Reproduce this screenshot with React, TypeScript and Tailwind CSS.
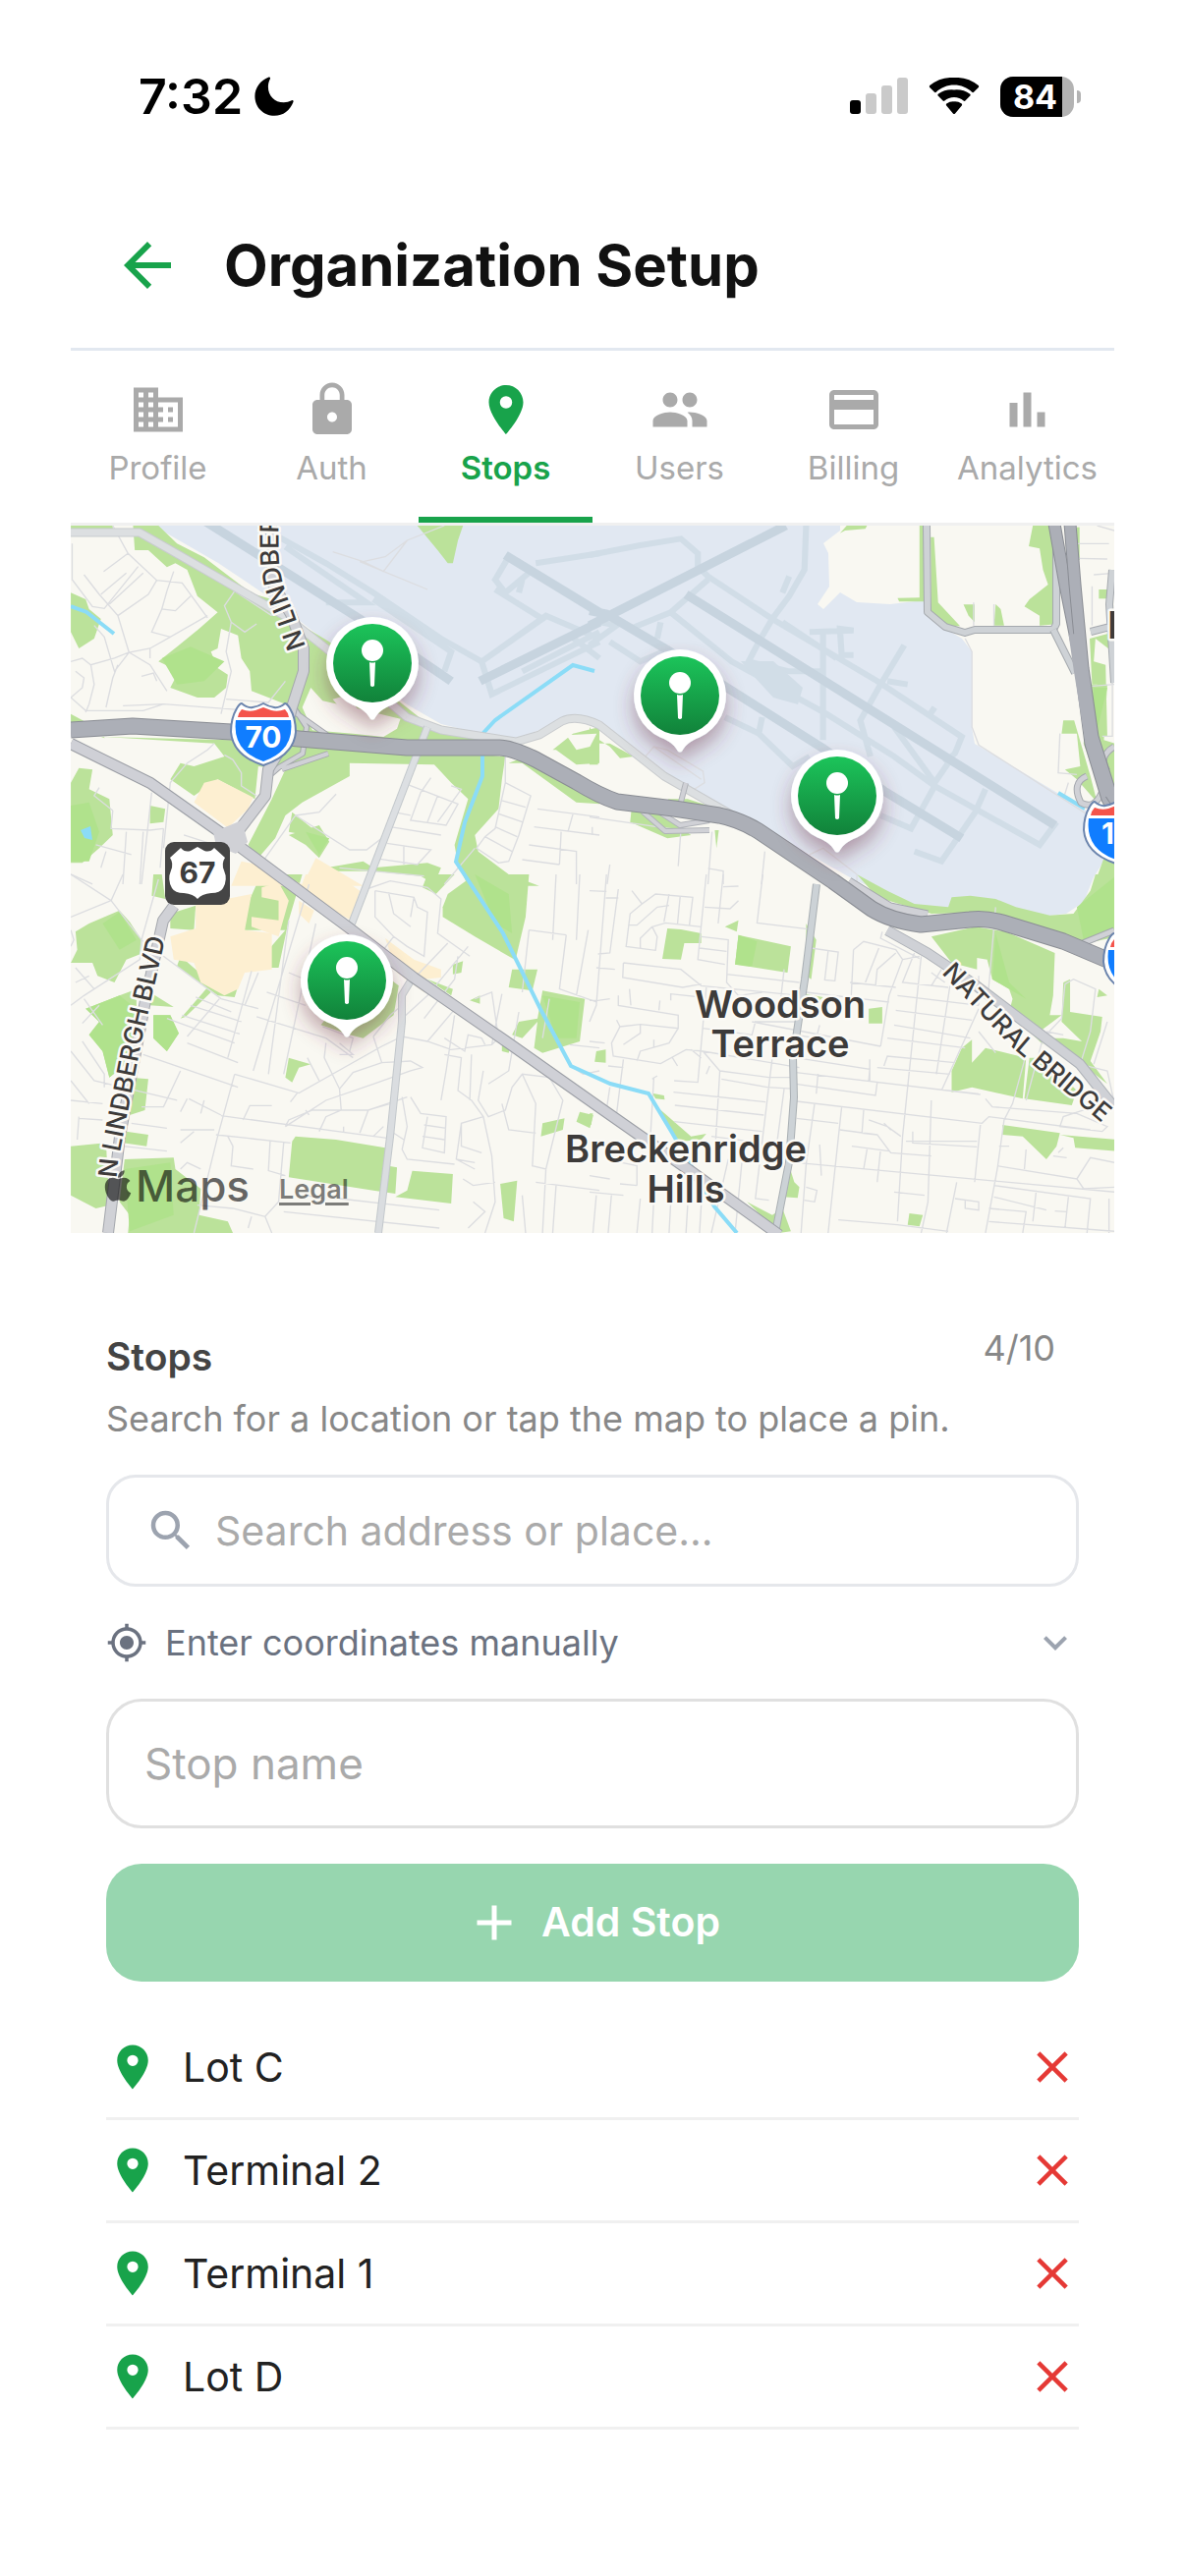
import type { ReactNode } from "react";
import {
  MdAdd,
  MdArrowBack,
  MdBusiness,
  MdClose,
  MdCreditCard,
  MdExpandMore,
  MdLock,
  MdMyLocation,
  MdPeople,
  MdSearch,
} from "react-icons/md";
import { FaApple } from "react-icons/fa";

type IconProps = { className?: string };

function PlaceIcon({ className }: IconProps) {
  return (
    <svg viewBox="0 0 24 24" fill="currentColor" className={className} aria-hidden="true">
      <path d="M12 2C8.13 2 5 5.13 5 9c0 5.25 7 13 7 13s7-7.75 7-13c0-3.87-3.13-7-7-7zm0 9.5a2.5 2.5 0 0 1 0-5 2.5 2.5 0 0 1 0 5z" />
    </svg>
  );
}

function AnalyticsIcon({ className }: IconProps) {
  return (
    <svg viewBox="0 0 24 24" fill="currentColor" className={className} aria-hidden="true">
      <path d="M4.600 9.2h3.2V19H4.600zM10.200 5h3.2v14h-3.2zM15.800 13h3.2v6h-3.200z" />
    </svg>
  );
}

function StatusBar() {
  return (
    <div className="flex h-[132px] items-center justify-between pt-16 pr-[34px] pl-[69px] text-black">
      <div className="flex items-center gap-3">
        <span className="text-[50px] leading-[60px] font-semibold">7:32</span>
        <svg viewBox="0 0 40 40" className="size-10" aria-hidden="true">
          <path
            d="M14.5 0.6C15.6 0 16.5 1 15.9 2.2C14.6 4.8 13.9 7.6 13.9 10.4C13.9 19.6 20.6 26.2 29.8 26.2C32.6 26.2 35.4 25.4 37.8 24.2C39 23.6 40 24.5 39.5 25.7C36.3 34.2 29.2 39.8 20.4 39.8C9 39.8 0.4 31.2 0.4 20C0.4 11.4 6 4 14.5 0.6Z"
            fill="#000"
          />
        </svg>
      </div>
      <div className="flex items-center gap-[21px]">
        <svg viewBox="0 0 59 38" className="h-[38px] w-[59px]" aria-label="Signal">
          <rect x="0" y="23" width="11" height="14" rx="3" fill="#000" />
          <rect x="16" y="16" width="11" height="21" rx="3" fill="#cacaca" />
          <rect x="32" y="8" width="11" height="29" rx="3" fill="#cacaca" />
          <rect x="48" y="0" width="11" height="37" rx="3" fill="#cacaca" />
        </svg>
        <svg viewBox="0 0 52 38" className="h-[38px] w-[52px]" aria-label="Wi-Fi">
          <path d="M26 7.6c7 0 13.4 2.7 18.2 7.2.5.5 1.3.5 1.8 0l4.8-4.9c.5-.5.5-1.3 0-1.8A36 36 0 0 0 26 0 36 36 0 0 0 1.2 8.1c-.5.5-.5 1.3 0 1.8L6 14.8c.5.5 1.3.5 1.8 0C12.6 10.3 19 7.6 26 7.6z" />
          <path d="M26 20c3.7 0 7 1.3 9.6 3.6.5.5 1.3.5 1.8 0l4.9-5c.5-.5.5-1.3 0-1.8A24 24 0 0 0 26 12.500a24 24 0 0 0-16.300 4.300c-.5.5-.5 1.3 0 1.800l4.900 5c.5.5 1.300.5 1.800 0C19 21.300 22.300 20 26 20z" />
          <path d="M33.800 28.400c.5-.5.5-1.300-.1-1.800A12 12 0 0 0 26 24.400a12 12 0 0 0-7.700 2.200c-.6.5-.6 1.300-.1 1.800l6.900 8.300c.5.5 1.300.5 1.800 0z" />
        </svg>
        <div className="flex items-center gap-[3px]">
          <div className="flex h-[41px] items-center rounded-[13px] bg-[#b3b3b3] pr-3">
            <span className="w-[63px] rounded-l-[13px] bg-black pl-2 text-center text-[34px] leading-[41px] font-bold text-white">
              84
            </span>
          </div>
          <span className="h-[13px] w-1 rounded-r-full bg-[#b3b3b3]" />
        </div>
      </div>
    </div>
  );
}

const tabs = [
  { label: "Profile", Icon: MdBusiness },
  { label: "Auth", Icon: MdLock },
  { label: "Stops", Icon: PlaceIcon, active: true },
  { label: "Users", Icon: MdPeople },
  { label: "Billing", Icon: MdCreditCard },
  { label: "Analytics", Icon: AnalyticsIcon },
];

function Tabs() {
  return (
    <nav className="grid grid-cols-6 border-b-[3px] border-[#f0f0f0]">
      {tabs.map(({ label, Icon, active }) => (
        <button
          key={label}
          type="button"
          aria-current={active ? "page" : undefined}
          className={
            active
              ? "flex flex-col items-center border-b-[6px] border-[#18a34b] pt-[30px] pb-[30px] text-[#18a34b]"
              : "flex flex-col items-center border-b-[6px] border-transparent pt-[30px] pb-[30px] text-[#aaaaaa]"
          }
        >
          <Icon className="size-[60px]" />
          <span
            className={
              active
                ? "mt-[9px] text-[33px] leading-10 font-semibold"
                : "mt-[9px] text-[33px] leading-10"
            }
          >
            {label}
          </span>
        </button>
      ))}
    </nav>
  );
}

/* Map data: four survey sheets, each with its own grid, placed on the 1062x720 map. */
const sheets = [
  {
    place: "translate(-2 -5) scale(.3444 .3333)",
    green: [
      "190,15 265,15 320,70 400,112 540,222 600,240 690,320 770,370 860,450 980,555 1060,620 1220,652 1220,690 660,665 640,600 640,560 540,520 535,460 510,420 500,350 450,330 440,390 420,400 440,450 470,470 465,510 430,540 380,540 300,510 325,460 265,430 320,385 385,330 440,280 380,230 350,150 315,130 290,142 235,90 195,90",
      "95,660 480,670 760,680 1230,715 1290,720 1280,790 1270,880 1200,960 1210,1010 1300,1080 1390,1115 1180,1115 1150,1050 1140,990 1180,850 1130,800 1080,745 830,740 830,780 690,860 640,900 610,970 560,1030 530,990 600,850 640,760 560,750 550,850 440,790 370,840 300,790 330,740 200,700",
      "6,800 30,755 70,760 60,820 120,850 130,960 90,1000 40,1045 6,1045",
      "6,220 50,240 60,270 95,300 75,360 30,390 6,340",
      "6,15 130,15 130,40 6,25",
      "1030,15 1165,15 1150,60 1135,130 1120,130 1090,90",
      "1350,700 1430,700 1490,650 1568,630 1568,740 1500,745 1440,700 1380,700",
      "1300,740 1340,740 1500,860 1568,865 1568,840 1350,720",
      "650,960 740,930 770,980 740,1030 700,990",
      "660,890 720,940 700,960 650,950",
      "240,870 285,880 280,920 240,925",
      "760,1060 870,1040 900,1060 1060,1045 1100,1060 1080,1110 1040,1085 900,1070 770,1070",
      "6,590 60,620 6,620",
    ],
    deep: ["275,420 360,385 460,430 400,490 320,500", "6,870 60,860 90,950 60,1040 6,1040", "700,950 770,970 740,1020"],
    cream: ["690,570 715,510 750,550 860,575 980,605 970,635 930,660 840,650 720,640", "780,545 830,530 860,590 800,570", "430,680 460,720 370,750 330,740 200,790 110,710 105,660", "1470,655 1560,650 1540,690 1500,700"],
    sand: ["400,800 440,790 545,845 530,880 470,938 370,860", "510,1040 560,1050 700,1115 480,1115", "690,1115 730,1030 870,1115"],
    taxi: ["M560 15L760 130L900 220L1100 360L1220 430L1410 290L1568 360", "M640 80L880 250L760 250M900 240L1130 400L1110 460", "M1300 110L1260 180L1290 220L1370 150M1260 210L1400 300L1220 430L1250 530L1568 370", "M1380 130L1568 100M1330 220L1340 180M1480 350L1568 420M1340 460L1568 340"],
    runway: ["M400 0L860 300L1130 490", "M1290 105L1568 280", "M1215 490L1568 310"],
    street: [
      "M130 15L175 100L260 182L335 190L410 297M10 70V180L70 262L105 268L205 140M45 165L90 225L145 290L178 402M175 100L103 155M95 225L170 160M120 255L220 160M145 290L235 225L260 182M310 155L290 215L275 270L315 275L360 230M275 270L245 340L300 355L410 290M75 320L105 355L135 460L178 402L240 390L300 355",
      "M6 430L40 420L65 440L135 420L178 402L240 440L290 520M65 440L75 500L60 560L50 585M20 460L45 480L40 510L6 540M215 475L250 465L260 490M145 440L130 480L110 570M240 390V420M480 310L465 400L480 460L450 590M480 310L460 260L490 215L600 290M480 310L520 340L555 315M6 540L50 580L220 580L280 560L540 580M465 545L590 555L640 490",
      "M780 95L870 125L935 110L1000 60L1110 15M870 125L930 155L1000 60M860 125L1060 210M430 680L410 700L350 740L300 800L280 1000M460 715L485 730L510 770V810L555 840M130 885L125 940L240 945L280 940M90 815L75 840L130 885M170 950L160 1110M110 1010L95 1060M80 990L185 1020M245 830L215 1110M220 950L210 1110M280 940L270 1060",
      "M670 900L830 1005L880 1005L950 950M670 900L560 1060M670 900L740 890L790 835M1000 805L1150 865L1115 930L1010 915L1040 830L1070 785M1090 840L1060 920M1130 810L1160 820L1090 920M960 890L1010 900M950 935L1100 960M940 985L1070 1005L1030 1050L900 1030M990 995V1050M1290 715L1290 800L1260 940L1230 965L1205 1000L1270 1045L1300 1040L1330 960L1365 840L1290 800M1280 855L1350 875M1270 895L1340 920M1260 935L1325 965M1230 965L1310 1010M1385 880L1568 905M1375 935L1568 960M1490 895L1475 950M1455 950L1450 1050M1360 990L1500 1010V1110M1340 1035L1450 1050",
      "M160 565L280 560M1110 1110L1200 1000M800 1060L1050 1085M340 960L430 990M6 1080L70 1110",
    ],
  },
  {
    place: "translate(528 -5) scale(.3444 .3333)",
    green: [
      "740,38 760,15 820,15 815,25 755,30",
      "975,15 988,15 988,247 915,247 910,236 975,235",
      "1008,50 1018,50 1030,250 1095,322 1050,325 1010,285",
      "1310,15 1370,15 1390,315 1330,320 1330,290 1285,262 1300,240 1355,195 1340,150 1330,85 1298,78",
      "1105,256 1138,256 1138,310 1120,290",
      "1200,255 1215,270 1225,320 1195,320",
      "1478,360 1551,340 1551,405 1495,360 1490,430 1525,440 1530,660 1500,660 1500,500 1485,500",
      "1478,500 1530,500 1520,670 1551,680 1551,860 1500,800 1460,680",
      "1400,610 1432,610 1480,780 1500,860 1440,790 1405,760 1450,750 1440,650 1395,650",
      "1505,210 1532,210 1532,238 1505,238",
      "1520,1030 1551,1030 1551,1115 1490,1115",
      "0,630 30,680 60,680 130,720 90,725 60,690 0,650",
      "0,700 25,700 25,745 0,745",
      "125,870 190,880 300,960 230,970 120,920",
      "230,850 290,850 380,880 300,885",
      "370,945 382,945 375,1000",
      "1440,20 1448,20 1448,120 1440,120",
    ],
    deep: ["1490,510 1530,510 1500,640 1480,640"],
    cream: [],
    sand: [],
    taxi: [
      "M0 105L150 75L270 55L320 100V140L350 170L540 300L850 490L1100 660L1080 710L1050 740",
      "M640 15L635 150L590 230L540 300L500 370L470 430L590 460H690",
      "M590 170L570 220M120 330L240 280L420 430L700 590L900 720L1020 810L1330 990L1380 920",
      "M240 280L350 180M210 310L200 360M650 340L780 335L740 330L745 410L780 410M690 340V670M570 310L730 420",
      "M930 380L860 500L800 610L830 720M880 490L940 500M1020 570L1000 600M900 630L1020 800L1060 740",
      "M1170 820L1140 890L1040 1040L960 1010M1020 810L950 940L860 900M400 600L500 650L600 750L650 720M510 600L500 650M60 370L150 430L240 390M0 380L80 320L30 310",
    ],
    runway: ["M285 225L1375 930", "M0 275L50 285L230 395L690 695L870 825L1100 970", "M0 320L580 15"],
    street: [
      "M1135 250V320M1195 255V320M1110 360L1130 400V630L1150 685L1551 950M1440 70H1535M1440 115L1530 117M1490 165L1551 160M1485 200V320M1500 15L1551 30M1485 505L1551 500M1515 658H1545V440M1390 650L1385 770L1440 775M1400 850L1415 800",
      "M165 720L190 690L230 700L335 765L340 800L310 820M190 690L330 790M650 1020L690 1000L790 1080V1110M0 905L270 945L262 1055M362 950L350 1110M350 1062L395 1070V1110M518 1010L508 1110M60 1050L52 1110M8 935V960",
    ],
  },
  {
    place: "translate(-2 355) scale(.3444 .3333)",
    green: [
      "20,175 60,150 150,110 180,145 215,200 220,240 170,260 135,330 85,310 70,270 6,270 25,230",
      "250,0 275,0 285,75 245,65",
      "300,120 375,95 370,170 300,165",
      "500,0 690,0 650,140 620,285 580,285 590,230 640,170 520,170 520,110 555,30",
      "50,410 150,370 200,350 200,410 240,360 310,405 240,400 210,480 190,560 120,620 100,540 60,490 90,450",
      "250,430 300,430 325,485 290,540 250,500",
      "330,250 430,340 510,310 490,375 440,370 320,280",
      "330,440 410,345 420,360 345,435",
      "180,620 235,625 225,720 180,735",
      "170,785 235,795 230,830 160,820",
      "6,830 110,820 120,1010 80,1020 6,980",
      "165,870 310,865 315,900 390,960 385,1040 470,1060 485,1095 175,1095 180,1040 150,1000",
      "670,800 790,810 935,835 945,890 970,895 965,975 900,965 650,925 660,815",
      "1015,905 1135,915 1130,1005 965,985 1000,965",
      "1275,945 1325,935 1315,1060 1285,1050",
      "650,560 715,580 680,590 660,635 640,620",
      "1105,100 1120,60 1200,0 1360,0 1350,130 1320,262 1200,190 1105,130",
      "1045,40 1060,0 1140,0 1085,60",
      "1310,290 1385,290 1370,355 1300,345",
      "1400,355 1525,380 1510,510 1400,545 1375,530 1385,450 1340,500 1310,490 1330,450 1385,440",
      "1135,275 1165,265 1160,300 1135,305",
      "1280,520 1305,520 1300,545 1280,540",
      "1400,760 1465,745 1460,780 1395,800",
      "1510,725 1550,735 1540,775 1500,755",
      "950,320 975,340 960,430 870,500 830,490 745,460 760,440 900,420",
      "1060,320 1135,350 1130,370",
      "1185,385 1215,370 1215,395",
    ],
    deep: ["100,150 150,115 200,200 150,230", "50,410 150,370 200,410 190,560 120,620 100,540 60,490 90,450", "250,430 300,430 325,485 290,540 250,500", "165,900 300,880 310,1040 180,1090", "1200,0 1300,60 1310,180 1260,150", "1400,370 1440,500 1500,500 1510,390"],
    cream: [],
    sand: [
      "300,190 375,165 375,60 440,80 540,60 520,170 600,180 600,290 520,300 500,350 460,370 390,330 370,270 310,260",
      "700,0 790,0 860,50 835,140 680,55",
      "570,40 620,25 650,80 620,190 540,160 540,130 620,140 620,80 570,70",
      "680,80 725,110 710,150 680,120",
      "935,195 1020,260 1100,290 1100,315 1050,320 1050,360 970,300",
    ],
    taxi: [],
    runway: [],
    street: [
      "M6 0L125 80L6 130M125 80L160 0M125 80L215 200L210 260L45 370L6 400M215 200L450 380L560 410M265 15L215 200M6 170L15 200L6 220M20 285L75 350M60 310L20 330M45 380L100 460M90 400L40 455M220 550L500 650M330 600L280 710L215 710M6 540L75 630L320 690M40 510L105 610V650M6 630L60 700M6 690L100 700M30 740L25 810M30 745L100 750M185 760L290 775M160 830L290 845",
      "M445 380L350 495M360 400L510 450M540 295L470 560M335 430L505 487M290 440L490 515M350 515L500 575M490 610L440 800L370 1095M490 610L680 668L925 525M560 300L520 400M710 30L545 600M650 140L590 610M730 150L635 610M555 435L760 500L840 560M585 360L700 400M650 300L720 330M355 685L450 735M375 375L480 420M350 685L330 725M400 690L390 730M600 706H535L515 750",
      "M450 737L940 805M640 770L760 690L900 640L1010 600L1045 590L1010 570L925 575L840 605L800 655M760 515L755 560L800 655L805 720M640 770L650 750L720 720L885 720L1000 680M740 785L760 740L805 720M860 790L885 720L950 700M900 800L930 770M675 668L655 695M700 720L710 735M812 770V790M800 515L840 550L800 550M705 560L740 630M750 465L840 500L830 540",
      "M435 795L655 820M330 780H430M370 785L330 820M470 800L485 830L480 890L545 900M595 815L590 905L640 920M635 820L620 1000L580 1045L485 1020L380 1010M580 1045L600 1095M540 1045L530 1080M635 1030L1095 1080M800 990L1095 1025M700 980L750 990M330 900L350 880L390 900",
      "M905 50V130L960 190L930 230M905 50L1020 70L1030 100L1060 115L1050 250L1000 220L960 190M945 55L960 120L1010 160M1020 70L1010 130M880 45L950 20L1060 40L1100 75L1090 180L1185 250M1120 210L1000 340M1180 220L1060 370L985 440M1150 250L1140 320L1050 440M900 495L950 430L985 400M900 495L925 575M925 525L985 495L1060 510L1130 535L1250 520L1270 500L1250 360L1200 380M1060 510L1150 400M1140 430L1115 600L1100 690M1110 500L1170 540L1180 490L1220 500L1230 520M1280 365L1250 520",
      "M985 680L1000 770L985 840L1000 870L1140 885M960 790L990 810M1010 680L1040 730L1115 740L1110 850L1045 835L1060 740M1050 765L1115 775M1045 800L1110 810M1110 550L1160 560L1150 660L1190 690L1225 740L1250 860L1260 1000L1230 1095M1225 740L1160 760L1145 870L1200 900M1160 760V830L1220 850M1190 550L1185 690M1225 600L1210 690L1240 740L1290 720L1310 650L1340 610L1420 620L1460 690L1410 900L1370 890L1380 700L1340 610M1280 700L1300 780L1380 790M1330 420L1300 600L1240 640M1420 380L1400 500M1350 1095L1340 980",
      "M1410 900L1400 1095M1380 940L1568 965M1440 950L1430 1095M1440 0L1430 200M1510 0L1500 200M1360 170L1470 185M1360 170L1340 360M1470 185L1450 350L1560 390M1535 170L1500 370M1480 520L1568 530M1165 930L1195 950L1260 940M1195 1000L1230 1030L1180 1080M1200 880L1145 870M1490 590L1520 610L1568 600",
    ],
  },
  {
    place: "translate(528 355) scale(.3444 .3333)",
    green: [
      "790,0 880,50 960,90 1060,100 1070,70 1125,65 1200,75 1260,100 1360,125 1430,120 1480,50 1495,0 1560,0 1560,190 1470,210 1210,125 1130,118 1010,120 850,70",
      "1010,190 1140,160 1230,175 1375,240 1370,370 1360,430 1395,430 1330,480 1340,520 1240,420 1250,380 1240,350 1190,320 1175,260 1145,255 1145,290 1070,270",
      "1400,330 1420,320 1420,420 1515,435 1510,480 1480,570 1530,640 1430,560 1350,500 1400,500 1455,510 1395,450",
      "1070,600 1100,530 1130,505 1130,575 1170,530 1290,560 1280,685 1130,650 1070,665",
      "1300,560 1340,560 1440,660 1425,705 1285,685",
      "1220,765 1390,790 1380,830 1350,870 1280,800 1220,795",
      "1390,795 1560,810 1560,845 1435,835 1430,805",
      "230,165 270,168 330,180 330,210 280,210 270,260 215,258",
      "440,185 595,220 585,300 430,275",
      "400,160 440,140 435,175",
      "825,410 865,405 865,455 825,455",
      "640,150 670,200 655,320 640,310",
      "20,540 48,535 48,575 15,572",
      "200,710 300,800 345,792 330,810 270,815 240,790",
      "185,668 220,675 222,688 195,685",
      "590,890 605,940 620,955 615,988 570,985",
      "465,1000 540,1040 570,1020 595,1090 560,1095",
      "945,1035 985,1040 975,1075 940,1070",
      "640,365 690,375 680,385 640,380",
      "0,730 10,730 5,765 0,765",
      "1505,350 1530,370 1500,375",
    ],
    deep: ["1200,180 1240,330 1290,380 1190,320", "1440,100 1560,0 1560,180 1460,200", "440,185 495,205 480,280 430,275"],
    cream: [],
    sand: [],
    taxi: [],
    runway: [],
    street: [
      "M125 50L155 90L195 60L305 70L295 155M155 90L120 120L108 220L195 232L200 190L185 160L225 148L330 160M115 155H140L200 100L235 95M235 60L220 145M268 65L260 150M185 160L150 195V225M50 0L20 400L0 450M85 45L60 240L25 243M0 50L50 52M48 72H85M345 0L320 260L400 275M395 0L380 150M395 38L440 36M340 100L415 105L440 80M512 0L495 148L645 167M330 190L410 200L405 330L440 370L510 360M325 225L405 235",
      "M100 270L270 290L330 340L620 370M100 270L98 315L275 345L330 335M405 305L620 330M575 290L565 380M20 285L75 290M0 385H25L60 380M118 350L122 400M85 370V400L262 430V470L150 458L90 465L65 515L70 555L210 578L285 535L335 540L385 600L370 860M240 385V365L330 375M208 385L205 415M90 465L80 445M150 458V485L100 520M262 470L235 515L150 540L140 570M190 505V530M245 560L260 585M345 345L320 635L250 630M335 470L480 490L490 450L610 450M335 540L620 590M0 510L45 515M55 585L100 590M100 565L80 730",
      "M480 450L860 525M385 600L530 620L610 620M390 625L525 650M248 665L520 695M252 705L515 735M250 755L510 785M525 650L610 655M540 560L490 990L530 995M575 655L550 850L590 870M355 585L345 610M190 620L180 800M185 625L200 615M360 800L510 820M410 870L360 1095M450 880L430 1095M0 970L100 980M20 980L10 1095M65 975L55 1095M95 880L140 890V950M0 920L60 930M90 945L140 950M150 990L140 1095M190 990L185 1095M240 1000L235 1095M290 1010L285 1095M330 1010L325 1095",
      "M655 225L735 237L725 325L695 322L705 235M780 230L810 205L905 230L925 260L885 370L860 525M780 230L770 440M855 225L815 330M905 240L850 290L845 340M770 330L905 345M640 360L885 390M925 260L975 250M960 240L925 330L1060 345M980 250L925 800L910 1060M1010 300L1050 330M1040 290L1010 340M865 175L860 195L975 257M910 370L1150 400M905 415L1130 445M900 460L1125 500M880 500L1110 530M870 585L880 555L1080 575M850 590L1065 610M1065 340L1025 610M1150 410L1040 660M1150 310V400",
      "M610 605L1155 672M680 460L670 500L610 490M610 560L828 595L825 630M828 565V630M610 640L845 675L850 635L1150 670M675 610L670 670M612 693L1160 760L1180 740L1480 780M665 700L640 885L625 1095M612 745L735 760M745 710L705 1095M810 720L805 790L850 795L890 850L1010 860M740 780L850 795M825 750L880 770L920 800M870 760L890 780M610 880L1551 970M955 785V820L1145 832M935 815H1145M1155 765L1138 940M1010 690L1000 1000L980 1095M820 840L810 900M680 825L685 920M775 830L885 845M860 840L850 940M900 970L990 980",
      "M1200 100L1175 400M1290 550L1250 700L1225 750L1205 900L1170 1095M1170 685L1190 710L1440 730L1530 770L1515 785L1390 770L1400 740L1460 720M1405 335L1395 440L1340 500L1290 690M1405 335L1430 320L1495 350L1480 480L1450 580L1530 600L1551 700M1530 450L1490 580M1205 890L1440 930L1480 865L1551 880M1290 840L1285 900M1440 930L1460 960L1551 955M1210 830H1240M1370 860L1410 865M1385 850L1400 835M1195 985L1350 1025M1085 940L1055 1095M1080 990L1150 1000V1025L1110 1020V995M1180 1020L1290 1030L1280 1095M1195 950L1480 990L1470 1095M1320 965L1310 1060M1415 985L1405 1080M1180 1060L1551 1090M1375 1028L1410 1030M735 1055L910 1070L1060 1090M640 955L672 965L665 1000L635 995",
      "M1200 545L1150 480M60 650L50 720M300 535L330 560M1400 490L1350 480M1535 990V1095",
    ],
  },
];

type Sheet = (typeof sheets)[number];

function Layer({ draw }: { draw: (sheet: Sheet) => ReactNode }) {
  return (
    <>
      {sheets.map((sheet) => (
        <g key={sheet.place} transform={sheet.place}>
          {draw(sheet)}
        </g>
      ))}
    </>
  );
}

function Areas({ shapes, fill }: { shapes: string[]; fill: string }) {
  return (
    <g fill={fill}>
      {shapes.map((points) => (
        <polygon key={points} points={points} />
      ))}
    </g>
  );
}

function Road({ d, width, fill, edge }: { d: string; width: number; fill: string; edge: string }) {
  return (
    <g fill="none" strokeLinejoin="round">
      <path d={d} stroke={edge} strokeWidth={width + 2} />
      <path d={d} stroke={fill} strokeWidth={width} />
    </g>
  );
}

function Interstate({ x, y, children }: { x: number; y: number; children?: ReactNode }) {
  return (
    <g transform={`translate(${x} ${y})`}>
      <path
        d="M-22-31Q-16-26-11-27Q-5-28 0-31Q5-28 11-27Q16-26 22-31Q24-31 27-26Q33-16 33-2Q31 22 0 32Q-31 22-33-2Q-33-16-27-26Q-24-31-22-31Z"
        fill="#fff"
        stroke="#6b84ad"
        strokeWidth="2"
      />
      <path d="M-22-25Q-15-22-8-24L0-27L8-24Q15-22 22-25Q25-22 26-17H-26Q-25-22-22-25Z" fill="#f4544b" />
      <path d="M-28-14H28Q32 17 0 28Q-32 17-28-14Z" fill="#107dff" />
      {children}
    </g>
  );
}

function StopPin({ x, y }: { x: number; y: number }) {
  return (
    <g transform={`translate(${x} ${y})`}>
      <path
        d="M0-47A47 47 0 0 1 20 42.500C11 46 6 50 2.500 56Q0 59-2.500 56C-6 50-11 46-20 42.500A47 47 0 0 1 0-47Z"
        fill="#fff"
        filter="url(#pin-shadow)"
      />
      <circle r="40" fill="url(#pin-fill)" />
      <circle cy="-13" r="11" fill="#fff" />
      <path d="M-3-1Q0 0 3-1L2 23Q0 25-2 23Z" fill="#fff" />
    </g>
  );
}

function StopsMap() {
  return (
    <div className="relative">
      <svg viewBox="0 0 1062 720" className="block w-full bg-[#f9f8f2]" role="img" aria-label="Map of stops">
        <defs>
          <linearGradient id="pin-fill" x1="0" y1="0" x2="0" y2="1">
            <stop offset="0" stopColor="#1cc45a" />
            <stop offset="1" stopColor="#11823a" />
          </linearGradient>
          <filter id="pin-shadow" x="-60%" y="-50%" width="220%" height="220%">
            <feDropShadow dx="0" dy="11" stdDeviation="10" floodColor="#6b2b45" floodOpacity="0.42" />
          </filter>
          <path id="lindbergh-north" d="M239 123L226 86Q214 60 212 35T214-60" />
          <path id="lindbergh-south" d="M44 690L48 648L72 525L102 395" />
          <path id="natural-bridge" d="M871 440L958 531L1066 622" />
        </defs>

        <path
          d="M84 0L150 38L205 75L260 118L342 182L377 202L418 212L453 218L477 208L515 192L538 202L597 248L631 272L700 305L752 335L800 362L834 375L872 392L941 388L996 397L1013 395L1031 383L1041 358L1051 342L1045 300L1031 288L920 222L917 205V128L907 115L886 102L869 88L868 76L834 80L800 78L783 68L766 85L760 80L772 62L771 28L766 18L783 5V0Z"
          fill="#e1e8f2"
        />
        <Layer draw={(s) => <Areas shapes={s.green} fill="#bbe29a" />} />
        <Layer draw={(s) => <Areas shapes={s.deep} fill="#b0e28c" />} />
        <Layer draw={(s) => <Areas shapes={s.cream} fill="#f9f8f2" />} />
        <Layer draw={(s) => <Areas shapes={s.sand} fill="#fdefd1" />} />
        <path d="M10 310L20 306L22 320L14 318Z" fill="#8bdcf7" />
        <Layer draw={(s) => <path d={s.taxi.join("")} fill="none" stroke="#d1dde7" strokeWidth="18" />} />
        <path d="M682 138L715 138L745 165L740 182L715 175L692 150Z" fill="#d1dde7" />
        <Layer draw={(s) => <path d={s.runway.join("")} fill="none" stroke="#c7d4df" strokeWidth="27" />} />
        <Layer draw={(s) => <path d={s.street.join("")} fill="none" stroke="#dcdde0" strokeWidth="4" />} />

        <g fill="none" stroke="#8bdcf7" strokeWidth="4">
          <path d="M0 82L16 88L44 110" />
          <path d="M533 148L511 142L432 198L419 212V255L401 302L392 342L440 415L478 492L509 550L549 568L588 578L612 618L655 693L678 720" />
          <path d="M1005 272L1032 288" />
        </g>

        <Road d="M0 7H70L100 24L218 92L260 125L342 195L377 208L453 220L477 213L500 199Q515 192 538 203L604 255L700 310" width={7} fill="#dcdfe1" edge="#c8cbce" />
        <Road d="M363 205L286 405" width={6} fill="#dcdfe2" edge="#c3c8cc" />
        <Road d="M348 460L337 478V505L325 622L313 720" width={6} fill="#dadde0" edge="#c3c8cc" />
        <Road d="M871 0L872 88L890 103L910 109L920 106H1000L1003 100V0" width={6} fill="#ced2d6" edge="#a5a9ae" />
        <Road d="M1038 108L1062 102M1000 106L1022 150M1060 45L1057 80L1062 160" width={6} fill="#ced2d6" edge="#a5a9ae" />
        <Road d="M759 365L747 462L735 542L736 582L731 648L717 720" width={6} fill="#ccd2d6" edge="#aab0b4" />
        <Road d="M831 412L872 435L917 465L1027 548L1062 592" width={9} fill="#cfd1d6" edge="#aeb2b8" />
        <Road d="M225 182L240 205L236 232L212 246L198 258M228 190L262 214M262 232L215 248" width={4} fill="#d0d1d6" edge="#a4a7ad" />
        <Road d="M204 0L206 60L224 90L237 125V148L225 185L215 225L201 248L198 275L162 322M105 387L94 402L77 478L50 622L38 720" width={10} fill="#d0d1d6" edge="#a4a7ad" />
        <Road d="M0 222L81 262L156 315L284 410L349 460L446 527L538 592L628 655L721 722" width={10} fill="#cfd0d6" edge="#9b9ea5" />
        <path d="M145 312L174 300L180 322L168 334L148 326Z" fill="#d0d1d6" />
        <Road d="M582 291L605 311L650 310M600 292L620 305L650 300M626 262L620 285" width={4} fill="#d0d1d6" edge="#b0b3b9" />
        <Road d="M1062 225Q1045 235 1055 250M1034 255Q1018 262 1028 282Q1042 290 1050 270M1030 425L1062 412" width={5} fill="#d0d1d6" edge="#a4a7ad" />
        <Road d="M792 362L834 388L872 396" width={7} fill="#d0d1d6" edge="#a4a7ad" />
        <Road d="M0 208L63 204L163 210L232 217L342 226H436Q448 226 473 238L515 261Q538 275 556 281L614 288L660 295Q680 299 700 311L776 362L815 390Q834 402 865 406L915 401Q930 399 948 404L1010 423L1062 445" width={15} fill="#acafb7" edge="#8a8d94" />
        <Road d="M1001-2L1012 60L1026 130L1038 222L1055 278L1064 295" width={11} fill="#acafb7" edge="#8a8d94" />
        <Road d="M1017-2L1022 60L1030 145L1040 215L1058 272L1070 290" width={11} fill="#acafb7" edge="#8a8d94" />
        <path d="M1022 110L1027 145L1039 220L1056 275" fill="none" stroke="#acafb7" strokeWidth="13" />

        <g
          fontFamily="Inter, sans-serif"
          fontWeight="600"
          fill="#3d3b3a"
          stroke="#fbfaf6"
          strokeWidth="5"
          strokeLinejoin="round"
          className="[paint-order:stroke]"
        >
          <g fontSize="38" textAnchor="middle">
            <text x="722" y="501">Woodson</text>
            <text x="722" y="541">Terrace</text>
            <text x="626" y="648">Breckenridge</text>
            <text x="626" y="689">Hills</text>
          </g>
          <text x="1055" y="115" fontSize="38">E</text>
          <g fontSize="26" fontWeight="500">
            <text>
              <textPath href="#lindbergh-north">N LINDBERGH</textPath>
            </text>
            <text textAnchor="middle">
              <textPath href="#lindbergh-south" startOffset="50%">N LINDBERGH BLVD</textPath>
            </text>
            <text textAnchor="middle">
              <textPath href="#natural-bridge" startOffset="50%">NATURAL BRIDGE</textPath>
            </text>
          </g>
        </g>

        <g fontFamily="Inter, sans-serif">
          <Interstate x={196} y={212}>
            <text x="0" y="14" textAnchor="middle" fontSize="30" fontWeight="700" fill="#fff">70</text>
          </Interstate>
          <Interstate x={1064} y={312}>
            <text x="-15" y="12" fontSize="30" fontWeight="700" fill="#fff">1</text>
          </Interstate>
          <Interstate x={1084} y={446} />
          <rect x="96" y="322" width="66" height="64" rx="9" fill="#454545" />
          <path
            d="M112 328Q116 333 122 331L129 327L136 331Q142 333 146 328L157 338Q153 344 156 351Q160 360 155 369Q152 374 143 374Q133 375 129 380Q125 375 115 374Q106 374 103 369Q98 360 102 351Q105 344 101 338Z"
            fill="#fff"
          />
          <text x="129" y="364" textAnchor="middle" fontSize="30" fontWeight="700" fill="#3d3d3d">67</text>
        </g>

        <StopPin x={307} y={140} />
        <StopPin x={620} y={173} />
        <StopPin x={780} y={275} />
        <StopPin x={281} y={463} />
      </svg>
      <div className="absolute bottom-[20px] left-[30px] flex items-end gap-[30px]">
        <span className="flex items-center text-[44px] leading-[56px] font-medium text-black/60">
          <FaApple className="size-[36px]" aria-hidden="true" />
          Maps
        </span>
        <a href="#legal" className="mb-1 text-[27px] leading-10 font-semibold text-black/50 underline decoration-[3px] underline-offset-4">
          Legal
        </a>
      </div>
    </div>
  );
}

const stops = ["Lot C", "Terminal 2", "Terminal 1", "Lot D"];

export default function App() {
  return (
    <div className="min-h-screen bg-white px-[72px] font-['Inter',sans-serif]">
      <StatusBar />
      <header className="flex items-center gap-[42px] border-b-[3px] border-[#e2e8f0] px-[42px] pt-[102px] pb-12">
        <button type="button" aria-label="Back" className="text-[#18a34b]">
          <MdArrowBack className="size-[72px]" />
        </button>
        <h1 className="text-[58px] leading-[72px] font-bold text-[#111111]">Organization Setup</h1>
      </header>
      <Tabs />
      <StopsMap />

      <main className="flex flex-col px-9 pt-[93px]">
        <div className="flex items-start justify-between pr-6">
          <h2 className="mt-[9px] text-[39px] leading-[48px] font-semibold text-[#444444]">Stops</h2>
          <span className="text-[36px] leading-[48px] text-[#888888]">4/10</span>
        </div>
        <p className="mt-[15px] text-[36px] leading-[48px] text-[#888888]">
          Search for a location or tap the map to place a pin.
        </p>

        <label className="mt-[33px] flex h-[114px] items-center gap-[18px] rounded-[30px] border-[3px] border-[#e5e7eb] px-9">
          <MdSearch className="size-[54px] shrink-0 text-[#9ca3af]" aria-hidden="true" />
          <span className="sr-only">Search address or place</span>
          <input
            type="text"
            placeholder="Search address or place..."
            className="min-w-0 flex-1 text-[41px] leading-[54px] outline-none placeholder:text-[#aaaaaa]"
          />
        </label>

        <button type="button" aria-expanded="false" className="mt-[27px] flex h-[60px] items-center gap-[18px] text-[#6b7280]">
          <MdMyLocation className="size-[42px]" />
          <span className="flex-1 text-left text-[36px] leading-[48px]">Enter coordinates manually</span>
          <MdExpandMore className="size-12 text-[#9ca3af]" />
        </button>

        <input
          type="text"
          aria-label="Stop name"
          placeholder="Stop name"
          className="mt-[27px] h-[132px] rounded-[36px] border-[3px] border-[#e0e0e0] px-9 text-[44px] outline-none placeholder:text-[#aaaaaa]"
        />

        <button
          type="button"
          className="mt-9 flex h-[120px] items-center justify-center gap-[18px] rounded-[36px] bg-[#97d6af] text-[41px] font-semibold text-white"
        >
          <MdAdd className="size-[60px]" />
          Add Stop
        </button>

        <ul className="mt-9">
          {stops.map((stop) => (
            <li key={stop} className="flex h-[105px] items-center border-b-[3px] border-[#f0f0f0]">
              <PlaceIcon className="size-[54px] text-[#18a34b]" />
              <span className="ml-6 flex-1 text-[41px] leading-[54px] text-[#222222]">{stop}</span>
              <button type="button" aria-label={`Remove ${stop}`} className="text-[#e53935]">
                <MdClose className="size-[54px]" />
              </button>
            </li>
          ))}
        </ul>
      </main>
    </div>
  );
}
